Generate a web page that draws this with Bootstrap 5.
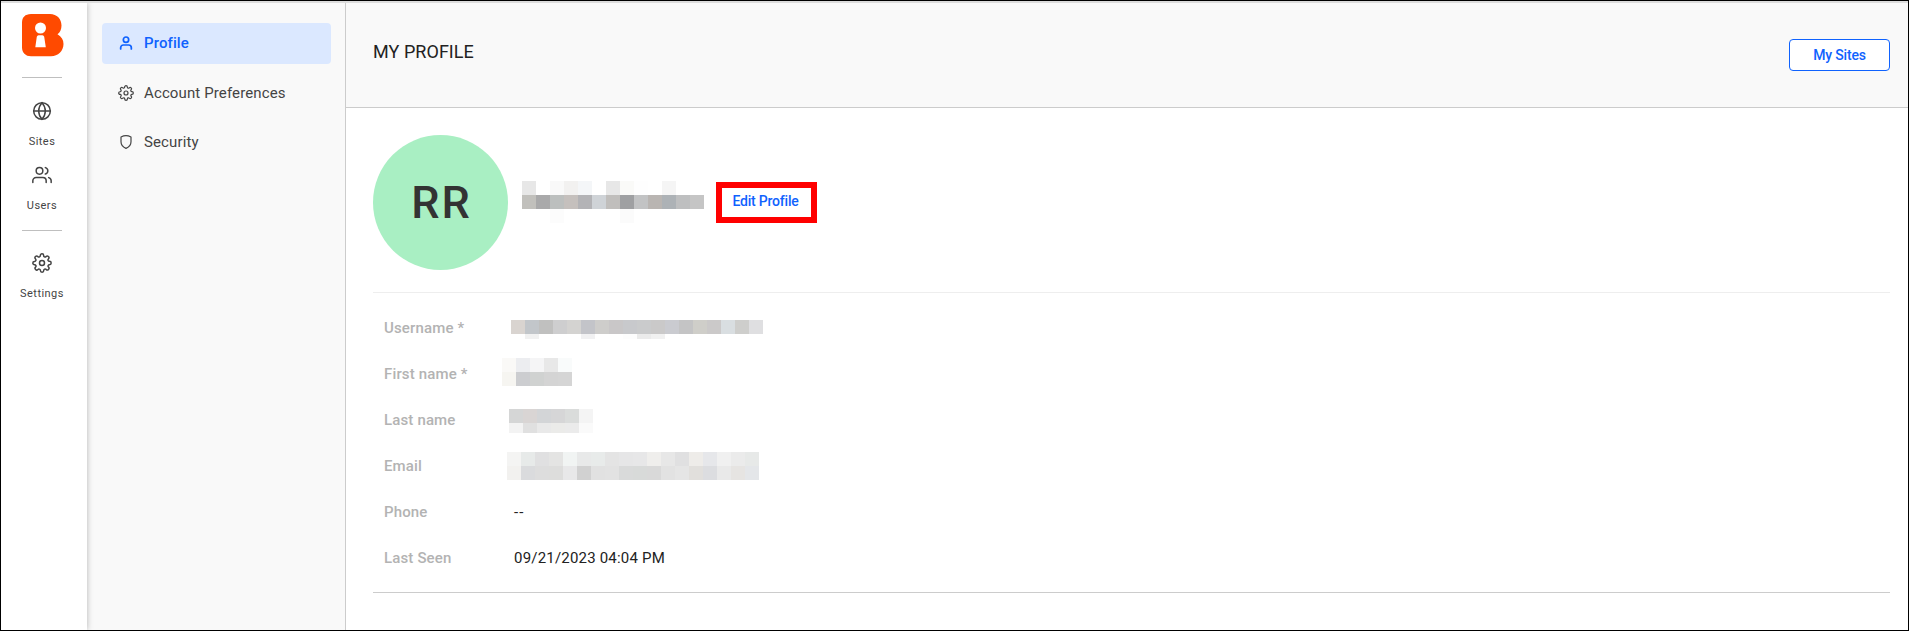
<!DOCTYPE html>
<html lang="en">
<head>
<meta charset="utf-8">
<title>My Profile</title>
<link href="https://cdn.jsdelivr.net/npm/bootstrap@5.3.0/dist/css/bootstrap.min.css" rel="stylesheet">
<style>
body{font-family:Roboto,"Liberation Sans",sans-serif;color:#333;line-height:20px}
.app{height:631px;border:1px solid #000}
.topline{height:2px;background:#ddd;flex:none}
.rail{width:86px;flex:none;padding:11px 3px 0 0;box-shadow:0 0 6px rgba(0,0,0,.28);z-index:1;clip-path:inset(0 -10px 0 0)}
.rail a{width:60px;font-size:11px;letter-spacing:.45px;line-height:14px;color:#444;gap:14px;padding-right:1px}
.rail .sep{width:40px;height:1px;flex:none;background:#bfbfbf;margin-right:1px}
.ico{fill:none;stroke:currentColor;stroke-width:1.8;stroke-linecap:round;stroke-linejoin:round;display:block}
.side{width:259px;flex:none;background:#f9f9f9;border-right:1px solid #ccc;padding:20px 14px 0 15px;gap:8px}
.side .nav-link{height:41px;padding:0 0 0 16px;gap:10px;color:#444;border-radius:4px;font-size:15px;letter-spacing:.12px}
.side .nav-link.active{background:#dbe8ff;color:#0f62fe;font-weight:500;padding-bottom:2px;letter-spacing:.1px}
.head{height:105px;background:#f9f9f9;border-bottom:1px solid #ccc;padding:0 18px 0 27px}
.head h1{font-size:18px;font-weight:400;line-height:24px;letter-spacing:.05px;margin:0 0 6px;color:#222}
.btn-sites{width:101px;height:32px;border:1px solid #0f62fe;color:#0f62fe;background:#fff;font-size:14px;font-weight:500;letter-spacing:-.2px;padding:0;border-radius:4px}
.body-pane{padding:27px 18px 0 27px}
.who{height:158px;border-bottom:1px solid #eee}
.avatar{width:135px;height:135px;background:#a9efc3;font-size:45px;font-weight:500;letter-spacing:2px;padding-left:2px}
.edit{width:101px;height:41px;border:6px solid #f00;color:#0f62fe;font-size:14px;font-weight:500;letter-spacing:-.2px;margin:47px 0 0 12px;padding:0 2px 3px 0}
.fields{padding:12px 0 11px 11px;border-bottom:1px solid #ccc;margin:0}
.fields .line{height:46px;font-size:15px}
.fields dt{width:118px;font-weight:500;color:#b3b3b3;line-height:46px;letter-spacing:.15px}
.fields dd{margin:0;line-height:46px;color:#222;letter-spacing:.2px}
.fields .txt{padding-left:12px}
.fields .none{letter-spacing:1px}
.mosaic{display:block;shape-rendering:crispEdges}
.m-name{margin:46px 0 0 14px}
.m-user{margin:15px 0 0 9px}
.m-first{margin:7px 0 0 0}
.m-last{margin:12px 0 0 7px}
.m-mail{margin:9px 0 0 5px}
</style>
</head>
<body>
<svg class="d-none">
<symbol id="gear" viewBox="0 0 24 24"><circle cx="12" cy="12" r="3"/><path d="M19.4 15a1.65 1.65 0 0 0 .33 1.82l.06.06a2 2 0 0 1-2.83 2.83l-.06-.06a1.65 1.65 0 0 0-2.8 1.17V21a2 2 0 0 1-4 0v-.09A1.65 1.65 0 0 0 9 19.4a1.65 1.65 0 0 0-1.82.33l-.06.06a2 2 0 0 1-2.83-2.83l.06-.06a1.65 1.65 0 0 0-1.17-2.8H3a2 2 0 0 1 0-4h.09A1.65 1.65 0 0 0 4.6 9a1.65 1.65 0 0 0-.33-1.82l-.06-.06a2 2 0 0 1 2.83-2.83l.06.06A1.65 1.65 0 0 0 9 4.6a1.65 1.65 0 0 0 1-1.51V3a2 2 0 0 1 4 0v.09a1.65 1.65 0 0 0 2.82 1.26l.06-.06a2 2 0 0 1 2.83 2.83l-.06.06A1.65 1.65 0 0 0 20.91 10H21a2 2 0 0 1 0 4h-.09a1.65 1.65 0 0 0-1.51 1z"/></symbol>
</svg>
<div class="app d-flex flex-column overflow-hidden">
<div class="topline"></div>
<div class="d-flex flex-grow-1">
<nav class="rail bg-white d-flex flex-column align-items-center position-relative">
  <svg width="43" height="43" viewBox="0 0 43 43" style="margin-left:1px"><path fill="#ff4a00" d="M9 0H28C35 0 39.500 5 39.500 11.500C39.500 15.500 38 18.300 35.500 20.300C39.500 22.500 41.500 26 41.500 30C41.500 37 36 42.300 29 42.300H9C3.500 42.300 0 38.500 0 33.500V8.500C0 3.500 3 0 9 0Z"/><circle cx="18.500" cy="14" r="5.500" fill="#fff"/><path fill="#fff" d="M16.500 21.200h4q1.300 0 1.700 1.500l1.600 10.600H13.300l1.500-10.600q.4-1.500 1.700-1.500z"/></svg>
  <div class="sep" style="margin-top:20px"></div>
  <a class="text-decoration-none d-flex flex-column align-items-center" style="margin-top:23px"><svg class="ico" width="20" height="20" viewBox="0 0 24 24"><circle cx="12" cy="12" r="10"/><path d="M2 12h20M12 2a15.300 15.300 0 0 1 4 10 15.300 15.300 0 0 1-4 10 15.300 15.300 0 0 1-4-10 15.300 15.300 0 0 1 4-10z"/></svg>Sites</a>
  <a class="text-decoration-none d-flex flex-column align-items-center" style="margin-top:16px"><svg class="ico" width="20" height="20" viewBox="0 0 24 24"><path d="M17 21v-2a4 4 0 0 0-4-4H5a4 4 0 0 0-4 4v2M23 21v-2a4 4 0 0 0-3-3.870M16 3.130a4 4 0 0 1 0 7.750"/><circle cx="9" cy="7" r="4"/></svg>Users</a>
  <div class="sep" style="margin-top:17px"></div>
  <a class="text-decoration-none d-flex flex-column align-items-center" style="margin-top:22px"><svg class="ico" width="20" height="20"><use href="#gear"/></svg>Settings</a>
</nav>
<nav class="side nav flex-column flex-nowrap">
  <a class="nav-link active d-flex align-items-center"><svg class="ico" style="stroke-width:2.600" width="16" height="16" viewBox="0 0 24 24"><path d="M20 21v-2a4 4 0 0 0-4-4H8a4 4 0 0 0-4 4v2"/><circle cx="12" cy="7" r="4"/></svg>Profile</a>
  <a class="nav-link d-flex align-items-center"><svg class="ico" width="16" height="16"><use href="#gear"/></svg>Account Preferences</a>
  <a class="nav-link d-flex align-items-center"><svg class="ico" width="16" height="16" viewBox="0 0 24 24"><path d="M12 21.500c4.500-2 7.500-5.500 7.500-10V4.500Q15.500 2.500 12 2.500T4.500 4.500v7c0 4.500 3 8 7.500 10z"/></svg>Security</a>
</nav>
<main class="flex-grow-1 bg-white">
  <header class="head d-flex align-items-center justify-content-between">
    <h1>MY PROFILE</h1>
    <button class="btn btn-sites">My Sites</button>
  </header>
  <div class="body-pane">
    <section class="who d-flex align-items-start">
      <div class="avatar rounded-circle d-flex align-items-center justify-content-center">RR</div>
      <svg class="mosaic m-name" data-h="14,14,14" data-c="e7e7e7,fff,f9f9f9,f2f1f0,f4f6f8,fff,e7e7e7,fafaf8,fefefe,fff,f5f5f5,fff,fff|c1c0bc,a9a9aa,bcbfbe,c5c0bd,b3b3b6,cfd3d7,c0bebc,9fa0a2,c2c3c4,b9b5b2,adb2b6,bebfc0,c5c5c5|fff,fff,fcfcfc,fff,fff,fff,fff,fbfbfb,fff,fff,fff,fff,fff"></svg>
      <a class="edit text-decoration-none d-flex align-items-center justify-content-center">Edit Profile</a>
    </section>
    <dl class="fields">
      <div class="line d-flex"><dt>Username *</dt><dd><svg class="mosaic m-user" data-h="14,5" data-c="d9d4d0,c2c6ca,c0c0bf,cececf,d4d3d1,c3c4c9,cecdcb,c9c7c8,c8c9cc,cacbcc,cac9c9,cacbd0,c4c4c5,cfcec9,cbc9c9,d9dee1,cececc,dfdfe1|fff,f1f1f1,fff,fff,fff,f1f1f2,fff,fff,fdfdfd,ebebeb,f1f1f1,fff,fff,fff,fff,fff,fff,fff"></svg></dd></div>
      <div class="line d-flex"><dt>First name *</dt><dd><svg class="mosaic m-first" data-h="14,14" data-c="faf9f7,ecedf0,f5f5f6,e8e8e8,f9fbfb|f6f5f1,cccdd0,d0d2d1,d4d4d4,d5d5d5"></svg></dd></div>
      <div class="line d-flex"><dt>Last name</dt><dd><svg class="mosaic m-last" data-h="14,10" data-c="d5d6d6,d9d5d4,d3d5d7,d6d6d7,dadcdb,f4f4f4|f3f3f3,e0e0e0,e9e9e9,ebebe9,ebebeb,fafafa"></svg></dd></div>
      <div class="line d-flex"><dt>Email</dt><dd><svg class="mosaic m-mail" data-h="14,14" data-c="f4f4f3,e7eae9,e0e0e1,e4e4e3,f1f4f3,e8e9e9,e8ebea,e4e4e4,e6e6e7,e7e7e8,efeeec,e7e7e7,e0e0e1,eeece9,e6e7ea,f0f0f0,ebebeb,e7e9e8|f2f1ef,dadbdd,dddddd,dddddc,e8e8e9,d1d1d1,e1e1e1,e2e2e2,d9dada,d8dad9,d9d9d9,e2e2e2,e5e5e5,e1dfdc,dcdde0,e9e9e9,e6e4e2,e4e6e9"></svg></dd></div>
      <div class="line d-flex"><dt>Phone</dt><dd class="txt none">--</dd></div>
      <div class="line d-flex"><dt>Last Seen</dt><dd class="txt">09/21/2023 04:04 PM</dd></div>
    </dl>
  </div>
</main>
</div>
</div>
<script src="https://cdn.jsdelivr.net/npm/bootstrap@5.3.0/dist/js/bootstrap.bundle.min.js"></script>
<script>
// Fill each redacted value with its rows of 14px colour cells
document.querySelectorAll('.mosaic').forEach(s => {
  const rows = s.dataset.c.split('|').map(r => r.split(','));
  const hs = s.dataset.h.split(',').map(Number);
  let y = 0, out = '';
  rows.forEach((r, i) => {
    r.forEach((c, x) => out += `<rect x="${x * 14}" y="${y}" width="14" height="${hs[i]}" fill="#${c}"/>`);
    y += hs[i];
  });
  s.setAttribute('width', rows[0].length * 14);
  s.setAttribute('height', y);
  s.innerHTML = out;
});
</script>
</body>
</html>
